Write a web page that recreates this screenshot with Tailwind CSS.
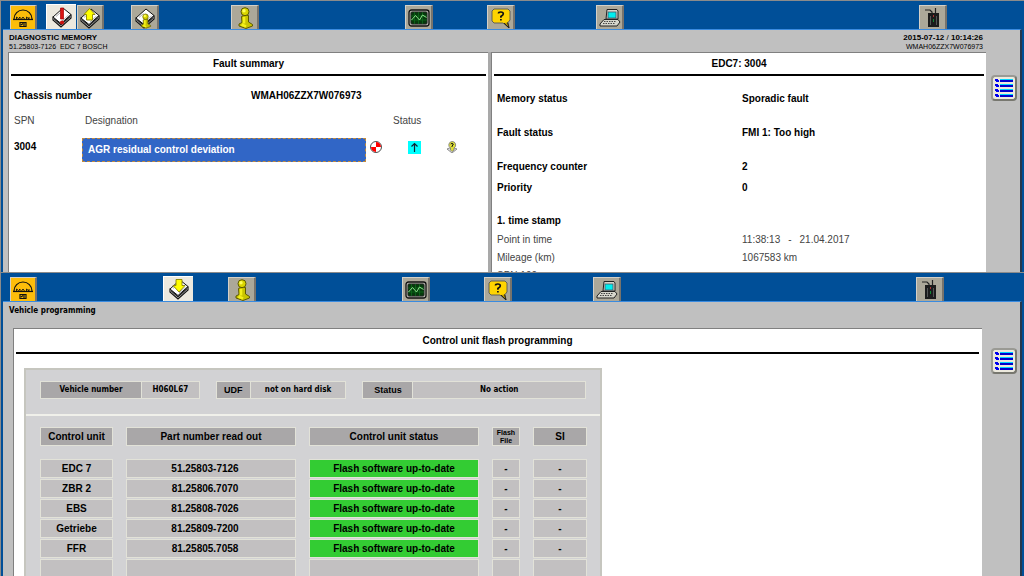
<!DOCTYPE html>
<html lang="en">
<head>
<meta charset="utf-8">
<meta name="viewport" content="width=device-width, initial-scale=1">
<title>Diagnostic memory and vehicle programming</title>
<script src="https://cdn.jsdelivr.net/npm/@tailwindcss/browser@4"></script>
</head>
<body class="grid h-screen grid-rows-[272fr_304fr] overflow-hidden bg-[#004f98] font-['Liberation_Sans',sans-serif] text-[10px] leading-4 text-black">

<svg class="hidden" aria-hidden="true">
  <symbol id="man" viewBox="0 0 24 22">
    <rect width="24" height="22" fill="#fdbd0a"/>
    <path d="M3 12A9 9 0 0 1 21 12" fill="none" stroke="#111" stroke-width="1.200"/>
    <path d="M2 12.500H22" stroke="#111" stroke-width="1.200"/>
    <path d="M5.500 12V10L7.500 11.500L9 10V12M10.500 12L12 10L13.500 12M15.500 12V10L18 12V10" fill="none" stroke="#111" stroke-width=".9"/>
    <path d="M9 15.500H15V19.500H9ZM10 18L12 16.500M13 19V16" fill="none" stroke="#111" stroke-width="1.200"/>
  </symbol>
  <symbol id="book" viewBox="0 0 22 22">
    <path d="M2 11V14L10 21L20 12V9Z" fill="#fff" stroke="#111" stroke-width="1.200"/>
    <path d="M3 12.500L10 18.700L19 10.500" fill="none" stroke="#222" stroke-width="1.400"/>
    <path d="M2 11L12 2L20 8.500L10 17.500Z" fill="#fff" stroke="#111"/>
    <path d="M5 10.500L9.500 6.500M11 15L17.500 9" stroke="#999" stroke-width=".8"/>
  </symbol>
  <symbol id="fault" viewBox="0 0 22 22">
    <use href="#book" width="22" height="22"/>
    <path d="M9.500 2H12.500V13H9.500Z" fill="#d91414" stroke="#a00" stroke-width=".7"/>
    <circle cx="11" cy="16.500" r="2.100" fill="#c90f0f"/>
  </symbol>
  <symbol id="up" viewBox="0 0 22 22">
    <use href="#book" width="22" height="22"/>
    <path d="M10.500 1.500L16 7.500H13.500V13H7.500V7.500H5Z" fill="#ff0" stroke="#8a8300" stroke-width=".9"/>
  </symbol>
  <symbol id="down" viewBox="0 0 22 22">
    <use href="#book" width="22" height="22"/>
    <path d="M8 1.500H14V7.500H17L11 14L5 7.500H8Z" fill="#ff0" stroke="#8a8300" stroke-width=".9"/>
  </symbol>
  <symbol id="info" viewBox="0 0 22 22">
    <path d="M7.500 9.500L11 8L14.500 8.500V15L18.500 17.500V19L12 21.500L5 19V17L8 15.500Z" fill="#c9c400" stroke="#5c5900"/>
    <path d="M10 10V16.500M7.500 17.500L12 19.500" stroke="#f4f01a" stroke-width="2.600"/>
    <circle cx="11" cy="4.700" r="4" fill="#dad600" stroke="#5c5900"/>
    <circle cx="10" cy="3.700" r="1.700" fill="#ffff5a"/>
  </symbol>
  <symbol id="bookinfo" viewBox="0 0 22 22">
    <use href="#book" width="22" height="22"/>
    <use href="#info" x="4" y="6" width="15" height="16"/>
  </symbol>
  <symbol id="scope" viewBox="0 0 22 20">
    <rect x="1" y="2" width="20" height="16" rx="2.500" fill="#b9b9b0" stroke="#111" stroke-width="1.300"/>
    <rect x="3" y="4" width="16" height="12" rx="1" fill="#053b0c" stroke="#222"/>
    <path d="M6.500 4V16M10.500 4V16M14.500 4V16M3 8H19M3 12H19" stroke="#0e6a1c" stroke-width=".8"/>
    <path d="M3.500 12L7.500 7.500L11.500 12L14.500 7L18.500 9.500" fill="none" stroke="#8ce08c"/>
  </symbol>
  <symbol id="help" viewBox="0 0 20 22">
    <path d="M3 2H17L19 4V13L17 15.500L18 21L12 16H3L1 14V4Z" fill="#ffd400" stroke="#555" stroke-width=".9"/>
    <path d="M13 16L18 21L16.500 15.500" fill="#b89600" stroke="#222"/>
    <path d="M7.500 6.500Q7.500 5 9.800 5Q12.300 5 12.300 6.800Q12.300 8 10.800 8.800L9.900 9.500V10.800M9.900 12V13.600" fill="none" stroke="#111" stroke-width="1.700"/>
  </symbol>
  <symbol id="pc" viewBox="0 0 22 20">
    <path d="M8 1.500H18L19 3V11H7Z" fill="#d6d6cc" stroke="#222"/>
    <rect x="9" y="4" width="8" height="6" fill="#0ee" stroke="#456" stroke-width=".8"/>
    <path d="M5 11.500H19L21 14L18 18H1V16Z" fill="#d6d6cc" stroke="#222"/>
    <path d="M5 13.500H17M4 15.500H16" stroke="#444" stroke-dasharray="1.500 1"/>
  </symbol>
  <symbol id="device" viewBox="0 0 22 22">
    <path d="M3 3H8L10 5V8M13.500 1V8" fill="none" stroke="#222" stroke-width="1.200"/>
    <rect x="6" y="6" width="11" height="14" fill="#1c1c1c"/>
    <path d="M8.500 9V18M14.500 9V18" stroke="#666" stroke-width=".8"/>
    <rect x="11" y="8" width="1" height="2" fill="#a33"/><rect x="11" y="12" width="1" height="3" fill="#183"/>
  </symbol>
  <symbol id="list" viewBox="0 0 20 20">
    <g fill="#00d5ff"><path d="M6 1H19V2H6ZM6 6H19V7H6ZM6 11H19V12H6ZM6 16H19V17H6Z"/></g>
    <path d="M6 2H19V4H6ZM6 7H19V9H6ZM6 12H19V14H6ZM6 17H19V19H6Z" fill="#00c"/>
    <path d="M1 1H4V2H5V4H2V3H1ZM1 6H4V7H5V9H2V8H1ZM1 11H4V12H5V14H2V13H1ZM1 16H4V17H5V19H2V18H1Z" fill="#00e"/>
  </symbol>
</svg>

<!-- Diagnostic memory window -->
<section class="flex min-h-0 flex-col overflow-hidden border-t border-l border-[#8b8b8b]" aria-label="Diagnostic memory">
  <nav class="flex h-7 shrink-0 items-end pr-[77px] pl-[9px]" aria-label="Diagnostic functions">
    <button aria-label="Home" class="grid h-6 w-[27px] place-items-center border-t border-r-2 border-l border-t-[#d4d0c8] border-r-[#77736c] border-l-[#d4d0c8] bg-[#fdbd0a]"><svg class="h-[22px] w-6"><use href="#man"/></svg></button>
    <button aria-label="Fault memory" class="ml-[9px] grid h-[25px] w-[30px] place-items-center border-t border-l border-white bg-[#ece9df]"><svg class="h-[22px] w-[22px]"><use href="#fault"/></svg></button>
    <button aria-label="Upload" class="ml-px grid h-6 w-[27px] place-items-center border-t border-r-2 border-l border-t-[#d4d0c8] border-r-[#77736c] border-l-[#d4d0c8] bg-[#aca899]"><svg class="h-[22px] w-[22px]"><use href="#up"/></svg></button>
    <button aria-label="Memory information" class="ml-[27px] grid h-6 w-7 place-items-center border-t border-r-2 border-l border-t-[#d4d0c8] border-r-[#77736c] border-l-[#d4d0c8] bg-[#aca899]"><svg class="h-[22px] w-[22px]"><use href="#bookinfo"/></svg></button>
    <button aria-label="Information" class="ml-[72px] grid h-6 w-7 place-items-center border-t border-r-2 border-l border-t-[#d4d0c8] border-r-[#77736c] border-l-[#d4d0c8] bg-[#aca899]"><svg class="h-[22px] w-[22px]"><use href="#info"/></svg></button>
    <button aria-label="Monitoring" class="ml-[146px] grid h-6 w-7 place-items-center border-t border-r-2 border-l border-t-[#d4d0c8] border-r-[#77736c] border-l-[#d4d0c8] bg-[#aca899]"><svg class="h-5 w-[22px]"><use href="#scope"/></svg></button>
    <button aria-label="Help" class="ml-[54px] grid h-6 w-7 place-items-center border-t border-r-2 border-l border-t-[#d4d0c8] border-r-[#77736c] border-l-[#d4d0c8] bg-[#aca899]"><svg class="h-[22px] w-5"><use href="#help"/></svg></button>
    <button aria-label="Computer" class="ml-[81px] grid h-6 w-7 place-items-center border-t border-r-2 border-l border-t-[#d4d0c8] border-r-[#77736c] border-l-[#d4d0c8] bg-[#aca899]"><svg class="h-5 w-[22px]"><use href="#pc"/></svg></button>
    <button aria-label="Interface" class="ml-auto grid h-6 w-7 place-items-center border-t border-r-2 border-l border-t-[#d4d0c8] border-r-[#77736c] border-l-[#d4d0c8] bg-[#aca899]"><svg class="h-[22px] w-[22px]"><use href="#device"/></svg></button>
  </nav>
  <div class="mr-0.5 ml-0.5 flex min-h-0 grow flex-col border-t border-r-2 border-t-[#3a8be0] border-r-[#26384d] bg-[#c0c0c0]">
    <header class="flex shrink-0 justify-between pt-[3px] pr-[37px] pb-px pl-1.5">
      <div>
        <h1 class="text-[8px] leading-[10px] font-bold">DIAGNOSTIC MEMORY</h1>
        <p class="text-[7px] leading-2 whitespace-pre">51.25803-7126  EDC 7 BOSCH</p>
      </div>
      <div class="text-right">
        <p class="text-[8px] leading-[10px] font-bold">2015-07-12 <span class="font-normal">/</span> 10:14:26</p>
        <p class="text-[7px] leading-2">WMAH06ZZX7W076973</p>
      </div>
    </header>
    <div class="flex min-h-0 grow pl-[5px]">
      <main class="min-w-0 flex-[480] overflow-hidden border-t border-l border-[#808080] bg-white">
        <h2 class="mr-0.5 ml-0.5 border-b-2 border-black pt-[3px] pb-0.5 text-center font-bold">Fault summary</h2>
        <dl class="mt-3 ml-[5px] flex font-bold"><dt class="w-[237px]">Chassis number</dt><dd>WMAH06ZZX7W076973</dd></dl>
        <table class="mt-[9px] ml-[5px] table-fixed text-left">
          <colgroup><col class="w-[68px]"><col class="w-[284px]"><col class="w-[27px]"><col class="w-[38px]"><col class="w-[42px]"></colgroup>
          <thead class="text-[#444]"><tr><th class="pb-[9px] font-normal">SPN</th><th class="pb-[9px] pl-[3px] font-normal">Designation</th><th></th><th colspan="2" class="pb-[9px] font-normal">Status</th></tr></thead>
          <tbody>
            <tr class="align-top">
              <th class="pt-px">3004</th>
              <td class="p-0"><button class="block h-6 w-full border border-dashed border-[#c08a3c] bg-[#3166c6] pl-[5px] text-left font-bold text-white">AGR residual control deviation</button></td>
              <td class="pt-[3px] pl-1"><svg class="h-3 w-3" viewBox="0 0 12 12" role="img" aria-label="Active"><circle cx="6" cy="6" r="5.500" fill="#fff" stroke="#222" stroke-width=".8"/><path d="M6 6V1A5 5 0 0 1 11 6ZM6 6V11A5 5 0 0 1 1 6Z" fill="#f00"/></svg></td>
              <td class="pt-[3px] pl-[15px]"><svg class="h-[13px] w-[13px]" viewBox="0 0 13 13" role="img" aria-label="Rising"><rect width="13" height="13" fill="#0ff"/><path d="M6.500 11V2.500M3.500 5.500L6.500 2.500L9.500 5.500" fill="none" stroke="#123" stroke-width="1.200"/></svg></td>
              <td class="pt-[3px] pl-[15px]"><svg class="h-3 w-3" viewBox="0 0 12 12" role="img" aria-label="Help"><path d="M1 8L6 12L11 8L6 6Z" fill="#ddd" stroke="#777" stroke-width=".8"/><path d="M6 .5A3.500 3.500 0 0 1 8 7V9L6 10.500L4.500 9V7A3.500 3.500 0 0 1 6 .5Z" fill="#dfe03a" stroke="#777" stroke-width=".8"/><path d="M4.700 3Q6 1.800 7.200 3Q7.400 4 6 5V6" fill="none" stroke="#111"/></svg></td>
            </tr>
          </tbody>
        </table>
      </main>
      <div class="w-[3px] shrink-0 bg-[#a9a9a9]"></div>
      <article class="min-w-0 flex-[495] overflow-hidden border-t border-l border-[#808080] bg-white">
        <h2 class="mr-0.5 ml-0.5 border-b-2 border-black pt-[3px] pb-0.5 text-center font-bold">EDC7: 3004</h2>
        <dl class="mt-[15px] grid grid-cols-[245px_1fr] pl-[5px] font-bold">
          <dt>Memory status</dt><dd>Sporadic fault</dd>
          <dt class="mt-[18px]">Fault status</dt><dd class="mt-[18px]">FMI 1: Too high</dd>
          <dt class="mt-[18px]">Frequency counter</dt><dd class="mt-[18px]">2</dd>
          <dt class="mt-[5px]">Priority</dt><dd class="mt-[5px]">0</dd>
        </dl>
        <h3 class="mt-[17px] pl-[5px] font-bold">1. time stamp</h3>
        <dl class="mt-[3px] grid grid-cols-[245px_1fr] gap-y-0.5 pl-[5px] text-[#444]">
          <dt>Point in time</dt><dd class="flex gap-2"><span>11:38:13</span><span>-</span><span>21.04.2017</span></dd>
          <dt>Mileage (km)</dt><dd>1067583 km</dd>
          <dt>SPN 190</dt><dd></dd>
        </dl>
      </article>
      <aside class="w-[34px] shrink-0 pt-[23px] pl-[5px]">
        <button aria-label="Open list" class="grid h-[26px] w-[26px] place-items-center rounded-sm border-2 border-t-[#9a9a94] border-r-[#77776f] border-b-[#77776f] border-l-[#9a9a94] bg-[#ece9dd]"><svg class="h-5 w-5"><use href="#list"/></svg></button>
      </aside>
    </div>
  </div>
</section>

<!-- Vehicle programming window -->
<section class="flex min-h-0 flex-col overflow-hidden border-t border-l border-[#8b8b8b]" aria-label="Vehicle programming">
  <nav class="flex h-7 shrink-0 items-end pr-20 pl-[9px]" aria-label="Programming functions">
    <button aria-label="Home" class="grid h-6 w-[27px] place-items-center border-t border-r-2 border-l border-t-[#d4d0c8] border-r-[#77736c] border-l-[#d4d0c8] bg-[#fdbd0a]"><svg class="h-[22px] w-6"><use href="#man"/></svg></button>
    <button aria-label="Download" class="ml-[126px] grid h-[25px] w-[30px] place-items-center border-t border-l border-white bg-[#ece9df]"><svg class="h-[22px] w-[22px]"><use href="#down"/></svg></button>
    <button aria-label="Information" class="ml-[35px] grid h-6 w-7 place-items-center border-t border-r-2 border-l border-t-[#d4d0c8] border-r-[#77736c] border-l-[#d4d0c8] bg-[#aca899]"><svg class="h-[22px] w-[22px]"><use href="#info"/></svg></button>
    <button aria-label="Monitoring" class="ml-[146px] grid h-6 w-7 place-items-center border-t border-r-2 border-l border-t-[#d4d0c8] border-r-[#77736c] border-l-[#d4d0c8] bg-[#aca899]"><svg class="h-5 w-[22px]"><use href="#scope"/></svg></button>
    <button aria-label="Help" class="ml-[54px] grid h-6 w-7 place-items-center border-t border-r-2 border-l border-t-[#d4d0c8] border-r-[#77736c] border-l-[#d4d0c8] bg-[#aca899]"><svg class="h-[22px] w-5"><use href="#help"/></svg></button>
    <button aria-label="Computer" class="ml-[81px] grid h-6 w-7 place-items-center border-t border-r-2 border-l border-t-[#d4d0c8] border-r-[#77736c] border-l-[#d4d0c8] bg-[#aca899]"><svg class="h-5 w-[22px]"><use href="#pc"/></svg></button>
    <button aria-label="Interface" class="ml-auto grid h-6 w-7 place-items-center border-t border-r-2 border-l border-t-[#d4d0c8] border-r-[#77736c] border-l-[#d4d0c8] bg-[#aca899]"><svg class="h-[22px] w-[22px]"><use href="#device"/></svg></button>
  </nav>
  <div class="mr-0.5 ml-0.5 flex min-h-0 grow flex-col border-t border-r-2 border-t-[#3a8be0] border-r-[#26384d] bg-[#c0c0c0]">
    <h1 class="shrink-0 pt-[3px] pb-[11px] pl-1.5 font-['DejaVu_Sans_Condensed','DejaVu_Sans',sans-serif] text-[8px] leading-3 font-bold">Vehicle programming</h1>
    <div class="flex min-h-0 grow pl-2.5">
      <div class="min-w-0 grow overflow-hidden border-t border-l border-[#808080] bg-white">
        <h2 class="mr-[3px] ml-0.5 border-b-2 border-black pt-1 pb-[3px] text-center font-bold">Control unit flash programming</h2>
        <div class="mt-3.5 ml-2.5 w-[578px] border-2 border-[#c6c6bf] bg-[#d2d2d4]">
          <dl class="flex gap-4 border-b-2 border-[#f0f0ea] px-3.5 pt-[11px] pb-[15px] text-center font-['DejaVu_Sans_Condensed','DejaVu_Sans',sans-serif] text-[8px] leading-4 font-bold">
            <div class="flex w-40 border border-[#e2e2d8]"><dt class="w-[101px] border-r border-[#e2e2d8] bg-[#a9a7a8]">Vehicle number</dt><dd class="grow bg-[#c2c0c1]">H060L67</dd></div>
            <div class="flex w-[131px] border border-[#e2e2d8]"><dt class="w-[34px] border-r border-[#e2e2d8] bg-[#a9a7a8] font-['Liberation_Sans',sans-serif] text-[9px]">UDF</dt><dd class="grow bg-[#c2c0c1]">not on hard disk</dd></div>
            <div class="flex w-[224px] border border-[#e2e2d8]"><dt class="w-[50px] border-r border-[#e2e2d8] bg-[#a9a7a8] font-['Liberation_Sans',sans-serif] text-[9px]">Status</dt><dd class="grow bg-[#c2c0c1]">No action</dd></div>
          </dl>
          <table class="mt-2.5 ml-px w-[573px] table-fixed border-separate border-spacing-x-[13px] border-spacing-y-px text-center font-bold">
            <colgroup><col class="w-[73px]"><col class="w-[170px]"><col class="w-[170px]"><col class="w-7"><col class="w-[54px]"></colgroup>
            <thead>
              <tr class="*:h-[19px] *:border *:border-[#e2e2d8] *:bg-[#a9a7a8] *:p-0"><th>Control unit</th><th>Part number read out</th><th>Control unit status</th><th class="text-[7px] leading-2">Flash<br>File</th><th>SI</th></tr>
            </thead>
            <tbody class="before:block before:h-[11px] before:content-['']">
              <tr class="*:h-[19px] *:border *:border-[#e2e2d8] *:bg-[#c2c0c1] *:p-0"><th>EDC 7</th><td class="pr-3!">51.25803-7126</td><td class="bg-[#33cc33]!">Flash software up-to-date</td><td>-</td><td>-</td></tr>
              <tr class="*:h-[19px] *:border *:border-[#e2e2d8] *:bg-[#c2c0c1] *:p-0"><th>ZBR 2</th><td class="pr-3!">81.25806.7070</td><td class="bg-[#33cc33]!">Flash software up-to-date</td><td>-</td><td>-</td></tr>
              <tr class="*:h-[19px] *:border *:border-[#e2e2d8] *:bg-[#c2c0c1] *:p-0"><th>EBS</th><td class="pr-3!">81.25808-7026</td><td class="bg-[#33cc33]!">Flash software up-to-date</td><td>-</td><td>-</td></tr>
              <tr class="*:h-[19px] *:border *:border-[#e2e2d8] *:bg-[#c2c0c1] *:p-0"><th>Getriebe</th><td class="pr-3!">81.25809-7200</td><td class="bg-[#33cc33]!">Flash software up-to-date</td><td>-</td><td>-</td></tr>
              <tr class="*:h-[19px] *:border *:border-[#e2e2d8] *:bg-[#c2c0c1] *:p-0"><th>FFR</th><td class="pr-3!">81.25805.7058</td><td class="bg-[#33cc33]!">Flash software up-to-date</td><td>-</td><td>-</td></tr>
              <tr class="*:h-[19px] *:border *:border-[#e2e2d8] *:bg-[#c2c0c1] *:p-0"><td></td><td></td><td></td><td></td><td></td></tr>
            </tbody>
          </table>
        </div>
      </div>
      <aside class="w-[38px] shrink-0 pt-5 pl-[9px]">
        <button aria-label="Open list" class="grid h-[26px] w-[26px] place-items-center rounded-sm border-2 border-t-[#9a9a94] border-r-[#77776f] border-b-[#77776f] border-l-[#9a9a94] bg-[#ece9dd]"><svg class="h-5 w-5"><use href="#list"/></svg></button>
      </aside>
    </div>
  </div>
</section>
</body>
</html>
